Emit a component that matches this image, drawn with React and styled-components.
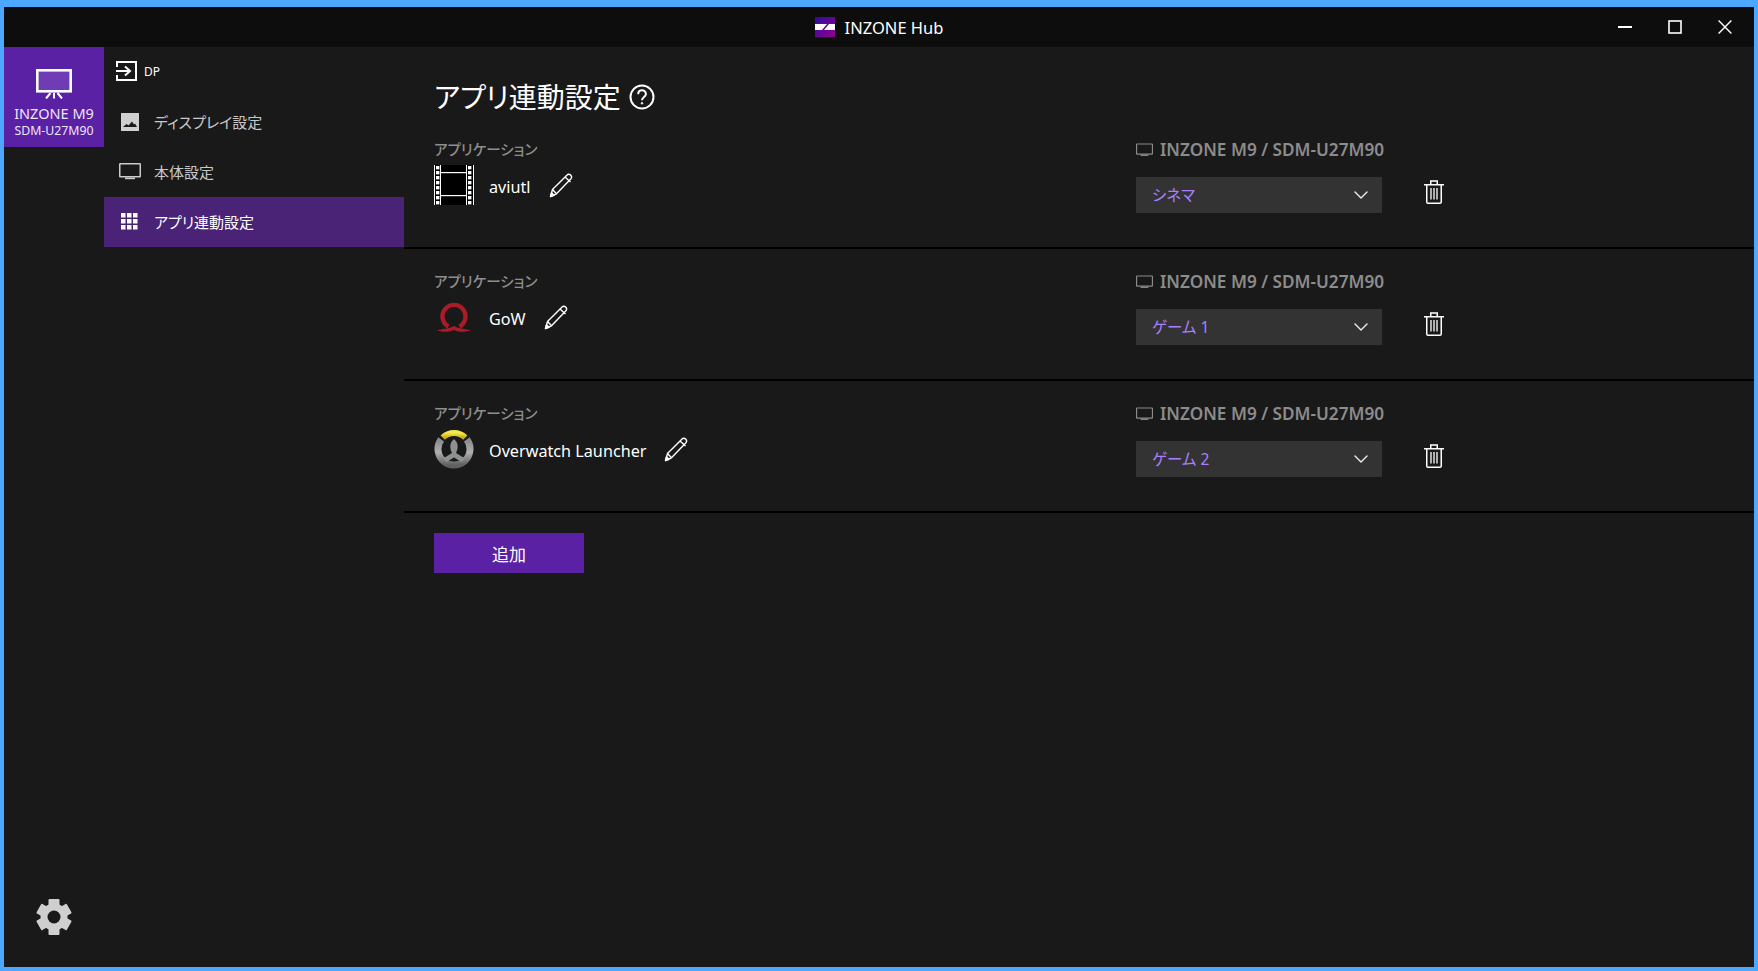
import React from 'react';
import styled, { createGlobalStyle } from 'styled-components';
import { ChevronDown } from 'lucide-react';

const GlobalStyle = createGlobalStyle`
  html, body { margin: 0; padding: 0; background: #4da6ff; overflow: hidden; }
  * { box-sizing: border-box; }
  body { font-family: "Noto Sans", "Noto Sans CJK JP", sans-serif; font-feature-settings: "palt"; }
`;

const Window = styled.div`
  width: 1758px; height: 971px; display: flex; flex-direction: column;
  border: solid #4da6ff; border-width: 7px 4px 4px 4px; background: #191919;
`;

const TitleBar = styled.header`
  height: 40px; flex: none; background: #0d0d0d; display: grid; grid-template-columns: 1fr auto 1fr; align-items: center;
`;
const TitleCenter = styled.div`
  grid-column: 2; display: flex; align-items: center; gap: 10px; color: #fff; font-size: 16.5px;
`;
const WindowControls = styled.div`
  grid-column: 3; justify-self: end; display: flex; padding-right: 4px;
`;
const ControlButton = styled.div`
  width: 50px; height: 40px; display: flex; align-items: center; justify-content: center;
`;

const Body = styled.div`
  flex: 1; display: flex; min-height: 0;
`;
const Rail = styled.aside`
  width: 100px; flex: none; display: flex; flex-direction: column; justify-content: space-between; align-items: center; padding-bottom: 32px;
`;
const DeviceTile = styled.div`
  width: 100px; height: 100px; background: #5b21a5; color: #ece6f5; display: flex; flex-direction: column; align-items: center; padding-top: 22px;
  svg { display: block; margin-bottom: 5px; }
`;
const DeviceName = styled.div`
  font-size: 14.5px; line-height: 18px; white-space: nowrap;
`;
const DeviceModel = styled.div`
  font-size: 12.3px; line-height: 17px; white-space: nowrap;
`;

const Nav = styled.nav`
  width: 300px; flex: none;
`;
const InputRow = styled.div`
  height: 50px; display: flex; align-items: center; gap: 7px; padding: 0 0 2px 12px; color: #fff; font-size: 12px;
`;
const NavItem = styled.div`
  height: 50px; display: flex; align-items: center; gap: 11px; padding: 0 0 1px 12px; font-size: 15px;
  color: ${p => (p.$active ? '#fff' : '#c8c8c8')};
  background: ${p => (p.$active ? '#4a2376' : 'transparent')};
`;
const NavIcon = styled.span`
  width: 27px; display: flex; justify-content: center; align-items: center;
`;

const Main = styled.main`
  flex: 1; min-width: 0;
`;
const Heading = styled.div`
  height: 70px; padding: 30px 0 0 30px; display: flex; align-items: flex-start; gap: 8px;
`;
const HeadingText = styled.h1`
  margin: 0; font-size: 28px; line-height: 40px; font-weight: 400; color: #fff;
`;
const HelpIcon = styled.svg`
  margin-top: 7px;
`;

const AppRow = styled.section`
  height: 132px; padding: 22px 0 0 30px; border-bottom: 2px solid #000; display: grid; grid-template-columns: 702px 1fr;
`;
const FieldLabel = styled.div`
  font-size: 14.5px; line-height: 20px; color: #8e8e8e; font-weight: 500;
`;
const AppInfo = styled.div`
  display: flex; align-items: center; height: 40px; margin-top: 6px; color: #fff; font-size: 16.2px;
`;
const AppIcon = styled.span`
  width: 40px; height: 40px; flex: none; margin-right: 15px;
  svg { display: block; }
`;
const AppName = styled.span`
  padding-top: 3px;
`;
const EditIcon = styled.svg`
  margin-left: 18px; flex: none;
`;
const DeviceHeader = styled.div`
  display: flex; align-items: center; gap: 7px; padding-top: 1px; height: 20px; font-size: 17.2px; line-height: 20px; color: #8c8c8c; font-weight: 600; white-space: nowrap;
`;
const ModeRow = styled.div`
  display: flex; align-items: center; gap: 42px; margin-top: 18px;
`;
const ModeSelect = styled.div`
  width: 246px; height: 36px; background: #333; color: #a880ff; font-size: 15.500px; display: flex; align-items: center; justify-content: space-between; padding: 0 9px 2px 16px;
  svg { color: #f0f0f0; margin-top: 2px; }
`;
const DeleteIcon = styled.svg`
  margin-bottom: 7px;
`;
const AddButton = styled.button`
  display: block; width: 150px; height: 40px; margin: 20px 0 0 30px; border: none; background: #5b21a5; color: #fff; font: inherit; font-size: 17px;
`;

const MonitorOutline = ({ color = '#ccc', width = 22, height = 17 }) => (
  <svg width={width} height={height} viewBox="0 0 22 17">
    <rect x="0.75" y="0.75" width="20.5" height="13" rx="0.5" fill="none" stroke={color} strokeWidth="1.5" />
    <rect x="6" y="14.6" width="10" height="1.6" fill={color} />
  </svg>
);

const FilmIcon = () => (
  <svg width="40" height="40" viewBox="0 0 40 40">
    <rect width="40" height="40" fill="#000" />
    <rect x="0" width="1" height="40" fill="#fff" />
    <rect x="6" width="1" height="40" fill="#fff" />
    <rect x="32" width="1" height="40" fill="#fff" />
    <rect x="39" width="1" height="40" fill="#fff" />
    <rect x="7" y="7" width="25" height="1.2" fill="#fff" />
    <rect x="7" y="30" width="25" height="1.2" fill="#fff" />
    {[1, 6, 11, 16, 21, 26, 31, 36].map(y => (
      <g key={y} fill="#fff">
        <rect x="2" y={y} width="3.4" height="3.4" />
        <rect x="34" y={y} width="3.4" height="3.4" />
      </g>
    ))}
  </svg>
);

const GowIcon = () => (
  <svg width="40" height="40" viewBox="0 0 40 40">
    <path d="M14.5 29.500A11.500 11.500 0 1 1 25.500 29.500" fill="none" stroke="#a81c2a" strokeWidth="4.400" />
    <path d="M3 33.500C9 31.500 14 32 20 29c6 3 11 2.500 17 4.500-8 2-13 1.500-17-.5-4 2-9 2.500-17 .5z" fill="#a81c2a" />
  </svg>
);

const OverwatchIcon = () => (
  <svg width="40" height="40" viewBox="0 0 40 40">
    <defs>
      <linearGradient id="ow-ring" x1="0" y1="0" x2="0" y2="1">
        <stop offset="0" stopColor="#85888a" />
        <stop offset="0.5" stopColor="#aeb0ae" />
        <stop offset="1" stopColor="#5f6060" />
      </linearGradient>
      <linearGradient id="ow-arc" x1="0" y1="0" x2="0" y2="1">
        <stop offset="0" stopColor="#f4e84a" />
        <stop offset="1" stopColor="#c9a818" />
      </linearGradient>
    </defs>
    <path d="M7.200 10.400A16 16 0 1 0 32.800 10.400" fill="none" stroke="url(#ow-ring)" strokeWidth="7" />
    <path d="M8.700 8.700A16 16 0 0 1 31.300 8.700" fill="none" stroke="url(#ow-arc)" strokeWidth="6" />
    <path d="M20 10c-4.500 3.500-4.500 9-2 14L9 29.500 12.500 33 20 28.500 27.500 33 31 29.500 22 24c2.500-5 2.500-10.500-2-14z" fill="#8f9190" />
  </svg>
);

const PencilIcon = () => (
  <EditIcon width="24" height="25" viewBox="0 0 24 25" fill="none" stroke="#fff" strokeWidth="1.400" strokeLinejoin="round">
    <path d="M1.500 23.500 3.500 16.500 17.800 2.200c1.200-1.200 2.700-1.200 3.800-.1 1.200 1.200 1.300 2.700.1 3.900L7.500 20.800z" />
    <path d="M16 4l5.500 5M3.500 16.500 7.500 20.800" />
    <path d="M1.500 23.500 2.500 19.800 5 22.300z" fill="#fff" />
  </EditIcon>
);

const TrashIcon = () => (
  <DeleteIcon width="20" height="24" viewBox="0 0 20 24" fill="none" stroke="#fff" strokeWidth="1.500">
    <path d="M0 4.750h20M6.750 4.500V1h6.500v3.500" />
    <path d="M2.750 4.750V22c0 .8.500 1.250 1.250 1.250h12c.8 0 1.250-.45 1.250-1.250V4.750" />
    <path d="M7 8v11.500M10 8v11.500M13 8v11.500" strokeWidth="1.300" />
  </DeleteIcon>
);

const GearIcon = () => (
  <svg width="36" height="36" viewBox="0 0 36 36">
    <g fill="#cfcfcf">
      <circle cx="18" cy="18" r="13.500" />
      <rect x="12.500" y="0" width="11" height="36" rx="1" />
      <rect x="12.500" y="0.500" width="11" height="35" rx="1" transform="rotate(60 18 18)" />
      <rect x="12.500" y="0.500" width="11" height="35" rx="1" transform="rotate(120 18 18)" />
    </g>
    <circle cx="18" cy="18" r="6.500" fill="#191919" />
  </svg>
);

const apps = [
  { name: 'aviutl', icon: <FilmIcon />, mode: 'シネマ' },
  { name: 'GoW', icon: <GowIcon />, mode: 'ゲーム 1' },
  { name: 'Overwatch Launcher', icon: <OverwatchIcon />, mode: 'ゲーム 2' },
];

export default function App() {
  return (
    <>
      <GlobalStyle />
      <Window>
        <TitleBar>
          <TitleCenter>
            <svg width="20" height="20" viewBox="0 0 20 20">
              <defs>
                <linearGradient id="logo-grad" x1="0" y1="0" x2="1" y2="1">
                  <stop offset="0" stopColor="#2d0c9e" />
                  <stop offset="1" stopColor="#94008f" />
                </linearGradient>
              </defs>
              <rect width="20" height="20" fill="url(#logo-grad)" />
              <path d="M0 7h12L7 13H0zM14 7h6v6H9z" fill="#fff" />
            </svg>
            INZONE Hub
          </TitleCenter>
          <WindowControls>
            <ControlButton>
              <svg width="14" height="2" viewBox="0 0 14 2"><rect width="14" height="2" fill="#fff" /></svg>
            </ControlButton>
            <ControlButton>
              <svg width="14" height="14" viewBox="0 0 14 14"><rect x="1" y="1" width="12" height="12" fill="none" stroke="#fff" strokeWidth="1.600" /></svg>
            </ControlButton>
            <ControlButton>
              <svg width="14" height="14" viewBox="0 0 14 14"><path d="M.6.6l12.800 12.800M13.400.6.6 13.400" stroke="#fff" strokeWidth="1.400" /></svg>
            </ControlButton>
          </WindowControls>
        </TitleBar>
        <Body>
          <Rail>
            <DeviceTile>
              <svg width="36" height="30" viewBox="0 0 36 30">
                <rect x="1.300" y="1.300" width="33.400" height="21" fill="#6f3cb5" stroke="#fff" strokeWidth="2.600" />
                <path d="M18 24v5.500M14.500 24 10 29.500M21.500 24 26 29.500" stroke="#fff" strokeWidth="2" fill="none" />
              </svg>
              <DeviceName>INZONE M9</DeviceName>
              <DeviceModel>SDM-U27M90</DeviceModel>
            </DeviceTile>
            <GearIcon />
          </Rail>
          <Nav>
            <InputRow>
              <svg width="21" height="20" viewBox="0 0 21 20" fill="none" stroke="#fff" strokeWidth="2">
                <path d="M1 6V1h19v18H1v-5" />
                <path d="M0 10h13M9 5.500 14 10l-5 4.500" />
              </svg>
              DP
            </InputRow>
            <NavItem>
              <NavIcon>
                <svg width="18" height="18" viewBox="0 0 18 18">
                  <rect width="18" height="18" fill="#d0d0d0" />
                  <path d="M2 14l3.500-3 2 1.500L11 8.500l2 3 1-1 2 3.500z" fill="#191919" />
                </svg>
              </NavIcon>
              ディスプレイ設定
            </NavItem>
            <NavItem>
              <NavIcon><MonitorOutline /></NavIcon>
              本体設定
            </NavItem>
            <NavItem $active>
              <NavIcon>
                <svg width="17" height="17" viewBox="0 0 17 17" fill="#fff">
                  {[0, 6, 12].map(y => [0, 6, 12].map(x => <rect key={`${x}-${y}`} x={x} y={y} width="4.500" height="4.500" />))}
                </svg>
              </NavIcon>
              アプリ連動設定
            </NavItem>
          </Nav>
          <Main>
            <Heading>
              <HeadingText>アプリ連動設定</HeadingText>
              <HelpIcon width="26" height="26" viewBox="0 0 26 26" fill="none" stroke="#fff">
                <circle cx="13" cy="13" r="11.500" strokeWidth="2" />
                <path d="M9.200 10.300c0-5.200 7.700-5.200 7.700-.3 0 3.100-3.900 2.800-3.900 6.200" strokeWidth="2" />
                <circle cx="13" cy="19.300" r="0.800" fill="#fff" />
              </HelpIcon>
            </Heading>
            {apps.map(app => (
              <AppRow key={app.name}>
                <div>
                  <FieldLabel>アプリケーション</FieldLabel>
                  <AppInfo>
                    <AppIcon>{app.icon}</AppIcon>
                    <AppName>{app.name}</AppName>
                    <PencilIcon />
                  </AppInfo>
                </div>
                <div>
                  <DeviceHeader>
                    <MonitorOutline color="#8c8c8c" width={17} height={14} />
                    INZONE M9 / SDM-U27M90
                  </DeviceHeader>
                  <ModeRow>
                    <ModeSelect>
                      {app.mode}
                      <ChevronDown size={24} strokeWidth={1.4} />
                    </ModeSelect>
                    <TrashIcon />
                  </ModeRow>
                </div>
              </AppRow>
            ))}
            <AddButton>追加</AddButton>
          </Main>
        </Body>
      </Window>
    </>
  );
}
